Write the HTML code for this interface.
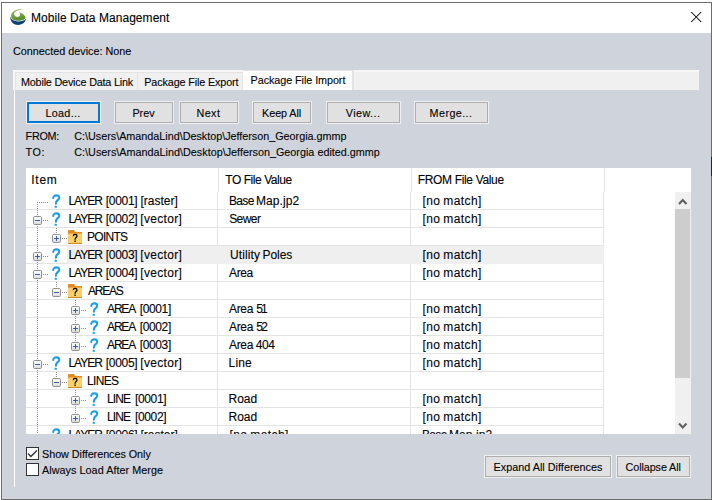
<!DOCTYPE html>
<html><head><meta charset="utf-8"><title>Mobile Data Management</title>
<style>
html,body{margin:0;padding:0;width:712px;height:500px;overflow:hidden;background:#fff;position:relative}
.b{position:absolute}
.t{position:absolute;font-family:"Liberation Sans",sans-serif;line-height:20px;white-space:pre;-webkit-text-stroke:0.1px #000}
.ov{position:absolute;left:0;top:0}
.clipt{position:absolute;left:0;top:0;width:712px;height:434px;overflow:hidden}
</style></head><body>
<div class='b' style='left:1px;top:2px;width:711px;height:498px;border:1px solid #6b6b6b;box-sizing:border-box;background:#cfd4dc'></div><div class='b' style='left:2px;top:3px;width:709px;height:30px;background:#fff'></div><div class='b' style='left:711px;top:157px;width:1px;height:19px;background:#13294a'></div><div class='b' style='left:13px;top:70px;width:686px;height:20px;background:#f7f7f7'></div><div class='b' style='left:15px;top:72px;width:684px;height:18px;background:#f0f0f0'></div><div class='b' style='left:15px;top:72px;width:123px;height:18px;border:1px solid #e3e3e3;border-bottom:none;box-sizing:border-box;background:#f0f0f0'></div><div class='b' style='left:138px;top:72px;width:105px;height:18px;border:1px solid #e3e3e3;border-bottom:none;border-left:none;box-sizing:border-box;background:#f0f0f0'></div><div class='b' style='left:243px;top:70px;width:111px;height:20px;background:#e3e3e3'></div><div class='b' style='left:243px;top:71px;width:109px;height:19px;background:#fff'></div><div class='b' style='left:14px;top:90px;width:1px;height:397px;background:#fff'></div><div class='b' style='left:26px;top:101px;width:75px;height:23px;background:rgba(255,255,255,0.65)'></div><div class='b' style='left:27px;top:102px;width:73px;height:21px;background:#e1e1e1;border:2px solid #0078d7;box-sizing:border-box'></div><div class='b' style='left:114px;top:101px;width:60px;height:23px;background:rgba(255,255,255,0.65)'></div><div class='b' style='left:115px;top:102px;width:58px;height:21px;background:#e1e1e1;border:1px solid #adadad;box-sizing:border-box'></div><div class='b' style='left:179px;top:101px;width:60px;height:23px;background:rgba(255,255,255,0.65)'></div><div class='b' style='left:180px;top:102px;width:58px;height:21px;background:#e1e1e1;border:1px solid #adadad;box-sizing:border-box'></div><div class='b' style='left:252px;top:101px;width:60px;height:23px;background:rgba(255,255,255,0.65)'></div><div class='b' style='left:253px;top:102px;width:58px;height:21px;background:#e1e1e1;border:1px solid #adadad;box-sizing:border-box'></div><div class='b' style='left:326px;top:101px;width:75px;height:23px;background:rgba(255,255,255,0.65)'></div><div class='b' style='left:327px;top:102px;width:73px;height:21px;background:#e1e1e1;border:1px solid #adadad;box-sizing:border-box'></div><div class='b' style='left:414px;top:101px;width:75px;height:23px;background:rgba(255,255,255,0.65)'></div><div class='b' style='left:415px;top:102px;width:73px;height:21px;background:#e1e1e1;border:1px solid #adadad;box-sizing:border-box'></div><div class='b' style='left:484px;top:455px;width:128px;height:23px;background:rgba(255,255,255,0.65)'></div><div class='b' style='left:485px;top:456px;width:126px;height:21px;background:#e1e1e1;border:1px solid #adadad;box-sizing:border-box'></div><div class='b' style='left:616px;top:455px;width:75px;height:23px;background:rgba(255,255,255,0.65)'></div><div class='b' style='left:617px;top:456px;width:73px;height:21px;background:#e1e1e1;border:1px solid #adadad;box-sizing:border-box'></div><div class='b' style='left:26px;top:168px;width:665px;height:266px;background:#fff'></div><div class='b' style='left:218px;top:168px;width:1px;height:24px;background:#e3e3e3'></div><div class='b' style='left:411px;top:168px;width:1px;height:24px;background:#e3e3e3'></div><div class='b' style='left:604px;top:168px;width:1px;height:24px;background:#e3e3e3'></div><div class='b' style='left:26px;top:209px;width:578px;height:1px;background:#e3e3e3'></div><div class='b' style='left:26px;top:227px;width:578px;height:1px;background:#e3e3e3'></div><div class='b' style='left:26px;top:245px;width:578px;height:1px;background:#e3e3e3'></div><div class='b' style='left:26px;top:263px;width:578px;height:1px;background:#e3e3e3'></div><div class='b' style='left:26px;top:281px;width:578px;height:1px;background:#e3e3e3'></div><div class='b' style='left:26px;top:299px;width:578px;height:1px;background:#e3e3e3'></div><div class='b' style='left:26px;top:317px;width:578px;height:1px;background:#e3e3e3'></div><div class='b' style='left:26px;top:335px;width:578px;height:1px;background:#e3e3e3'></div><div class='b' style='left:26px;top:353px;width:578px;height:1px;background:#e3e3e3'></div><div class='b' style='left:26px;top:371px;width:578px;height:1px;background:#e3e3e3'></div><div class='b' style='left:26px;top:389px;width:578px;height:1px;background:#e3e3e3'></div><div class='b' style='left:26px;top:407px;width:578px;height:1px;background:#e3e3e3'></div><div class='b' style='left:26px;top:425px;width:578px;height:1px;background:#e3e3e3'></div><div class='b' style='left:217px;top:192px;width:1px;height:242px;background:#e3e3e3'></div><div class='b' style='left:410px;top:192px;width:1px;height:242px;background:#e3e3e3'></div><div class='b' style='left:603px;top:192px;width:1px;height:242px;background:#e3e3e3'></div><div class='b' style='left:67px;top:246px;width:537px;height:18px;background:#efefef'></div><div class='b' style='left:675px;top:192px;width:16px;height:242px;background:#f0f0f0'></div><div class='b' style='left:675px;top:209px;width:15px;height:169px;background:#cdcdcd'></div><div class='b' style='left:26px;top:447px;width:13px;height:13px;background:#fff;border:1px solid #333;box-sizing:border-box'></div><div class='b' style='left:26px;top:463px;width:13px;height:13px;background:#fff;border:1px solid #333;box-sizing:border-box'></div>
<svg class='ov' width='712' height='500' viewBox='0 0 712 500'><defs><linearGradient id='eg' x1='0' y1='0' x2='0' y2='1'><stop offset='0' stop-color='#ffffff'/><stop offset='1' stop-color='#dcdcdc'/></linearGradient><clipPath id='tc'><rect x='26' y='168' width='665' height='266'/></clipPath></defs><g clip-path='url(#tc)'><path d='M679 204 L682.75 200 L686.5 204' stroke='#606060' stroke-width='2.1' fill='none'/><path d='M679 423.5 L682.75 427.5 L686.5 423.5' stroke='#606060' stroke-width='2.1' fill='none'/><rect x='37' y='202' width='1' height='1' fill='#8c8c8c'/><rect x='37' y='204' width='1' height='1' fill='#8c8c8c'/><rect x='37' y='206' width='1' height='1' fill='#8c8c8c'/><rect x='37' y='208' width='1' height='1' fill='#8c8c8c'/><rect x='37' y='202' width='1' height='1' fill='#8c8c8c'/><rect x='39' y='202' width='1' height='1' fill='#8c8c8c'/><rect x='41' y='202' width='1' height='1' fill='#8c8c8c'/><rect x='43' y='202' width='1' height='1' fill='#8c8c8c'/><rect x='45' y='202' width='1' height='1' fill='#8c8c8c'/><rect x='47' y='202' width='1' height='1' fill='#8c8c8c'/><g transform='translate(52,194.5)'><path d='M1.3 3.5 C1.3 1.6 2.6 0.9 4.3 0.9 C6.2 0.9 7.2 1.9 7.2 3.3 C7.2 4.7 6 5.4 5.1 6.1 C4.3 6.8 3.9 7.6 3.9 9.3' stroke='#1e9fe6' stroke-width='2.1' fill='none' stroke-linecap='round'/><path d='M3.8 10.9 L5.3 12.3 L4.8 13.2 L2.8 13.2 L2.3 12.3Z' fill='#1e9fe6'/></g><rect x='37' y='210' width='1' height='1' fill='#8c8c8c'/><rect x='37' y='212' width='1' height='1' fill='#8c8c8c'/><rect x='37' y='214' width='1' height='1' fill='#8c8c8c'/><rect x='37' y='216' width='1' height='1' fill='#8c8c8c'/><rect x='37' y='218' width='1' height='1' fill='#8c8c8c'/><rect x='37' y='220' width='1' height='1' fill='#8c8c8c'/><rect x='37' y='220' width='1' height='1' fill='#8c8c8c'/><rect x='37' y='222' width='1' height='1' fill='#8c8c8c'/><rect x='37' y='224' width='1' height='1' fill='#8c8c8c'/><rect x='37' y='226' width='1' height='1' fill='#8c8c8c'/><rect x='37' y='220' width='1' height='1' fill='#8c8c8c'/><rect x='39' y='220' width='1' height='1' fill='#8c8c8c'/><rect x='41' y='220' width='1' height='1' fill='#8c8c8c'/><rect x='43' y='220' width='1' height='1' fill='#8c8c8c'/><rect x='45' y='220' width='1' height='1' fill='#8c8c8c'/><rect x='47' y='220' width='1' height='1' fill='#8c8c8c'/><rect x='33.5' y='216.5' width='8' height='8' rx='1.2' fill='url(#eg)' stroke='#8f8f8f'/><rect x='35' y='220' width='5' height='1' fill='#3c5da8'/><g transform='translate(52,212.5)'><path d='M1.3 3.5 C1.3 1.6 2.6 0.9 4.3 0.9 C6.2 0.9 7.2 1.9 7.2 3.3 C7.2 4.7 6 5.4 5.1 6.1 C4.3 6.8 3.9 7.6 3.9 9.3' stroke='#1e9fe6' stroke-width='2.1' fill='none' stroke-linecap='round'/><path d='M3.8 10.9 L5.3 12.3 L4.8 13.2 L2.8 13.2 L2.3 12.3Z' fill='#1e9fe6'/></g><rect x='37' y='228' width='1' height='1' fill='#8c8c8c'/><rect x='37' y='230' width='1' height='1' fill='#8c8c8c'/><rect x='37' y='232' width='1' height='1' fill='#8c8c8c'/><rect x='37' y='234' width='1' height='1' fill='#8c8c8c'/><rect x='37' y='236' width='1' height='1' fill='#8c8c8c'/><rect x='37' y='238' width='1' height='1' fill='#8c8c8c'/><rect x='37' y='240' width='1' height='1' fill='#8c8c8c'/><rect x='37' y='242' width='1' height='1' fill='#8c8c8c'/><rect x='37' y='244' width='1' height='1' fill='#8c8c8c'/><rect x='56' y='228' width='1' height='1' fill='#8c8c8c'/><rect x='56' y='230' width='1' height='1' fill='#8c8c8c'/><rect x='56' y='232' width='1' height='1' fill='#8c8c8c'/><rect x='56' y='234' width='1' height='1' fill='#8c8c8c'/><rect x='56' y='236' width='1' height='1' fill='#8c8c8c'/><rect x='56' y='238' width='1' height='1' fill='#8c8c8c'/><rect x='56' y='238' width='1' height='1' fill='#8c8c8c'/><rect x='58' y='238' width='1' height='1' fill='#8c8c8c'/><rect x='60' y='238' width='1' height='1' fill='#8c8c8c'/><rect x='62' y='238' width='1' height='1' fill='#8c8c8c'/><rect x='64' y='238' width='1' height='1' fill='#8c8c8c'/><rect x='66' y='238' width='1' height='1' fill='#8c8c8c'/><rect x='52.5' y='234.5' width='8' height='8' rx='1.2' fill='url(#eg)' stroke='#8f8f8f'/><rect x='54' y='238' width='5' height='1' fill='#3c5da8'/><rect x='56' y='236' width='1' height='5' fill='#3c5da8'/><g transform='translate(68,230)'><path d='M0 1 Q0 0 1 0 L6 0 L7 2 L14 2 L14 14 L0 14Z' fill='#e38a22'/><rect x='0' y='3.5' width='14' height='10.5' fill='#fbd06a'/><rect x='0' y='3' width='14' height='1' fill='#f0a640'/><rect x='0' y='13' width='14' height='1' fill='#c98a2a'/><path d='M5.3 6.2 C5.3 4.9 6.1 4.4 7.1 4.4 C8.2 4.4 9 5 9 6 C9 7 8.3 7.4 7.7 7.8 C7.2 8.2 7.1 8.7 7.1 9.7' stroke='#000' stroke-width='1.25' fill='none'/><rect x='6.4' y='10.5' width='1.4' height='1.4' fill='#000'/></g><rect x='37' y='246' width='1' height='1' fill='#8c8c8c'/><rect x='37' y='248' width='1' height='1' fill='#8c8c8c'/><rect x='37' y='250' width='1' height='1' fill='#8c8c8c'/><rect x='37' y='252' width='1' height='1' fill='#8c8c8c'/><rect x='37' y='254' width='1' height='1' fill='#8c8c8c'/><rect x='37' y='256' width='1' height='1' fill='#8c8c8c'/><rect x='37' y='256' width='1' height='1' fill='#8c8c8c'/><rect x='37' y='258' width='1' height='1' fill='#8c8c8c'/><rect x='37' y='260' width='1' height='1' fill='#8c8c8c'/><rect x='37' y='262' width='1' height='1' fill='#8c8c8c'/><rect x='37' y='256' width='1' height='1' fill='#8c8c8c'/><rect x='39' y='256' width='1' height='1' fill='#8c8c8c'/><rect x='41' y='256' width='1' height='1' fill='#8c8c8c'/><rect x='43' y='256' width='1' height='1' fill='#8c8c8c'/><rect x='45' y='256' width='1' height='1' fill='#8c8c8c'/><rect x='47' y='256' width='1' height='1' fill='#8c8c8c'/><rect x='33.5' y='252.5' width='8' height='8' rx='1.2' fill='url(#eg)' stroke='#8f8f8f'/><rect x='35' y='256' width='5' height='1' fill='#3c5da8'/><rect x='37' y='254' width='1' height='5' fill='#3c5da8'/><g transform='translate(52,248.5)'><path d='M1.3 3.5 C1.3 1.6 2.6 0.9 4.3 0.9 C6.2 0.9 7.2 1.9 7.2 3.3 C7.2 4.7 6 5.4 5.1 6.1 C4.3 6.8 3.9 7.6 3.9 9.3' stroke='#1e9fe6' stroke-width='2.1' fill='none' stroke-linecap='round'/><path d='M3.8 10.9 L5.3 12.3 L4.8 13.2 L2.8 13.2 L2.3 12.3Z' fill='#1e9fe6'/></g><rect x='37' y='264' width='1' height='1' fill='#8c8c8c'/><rect x='37' y='266' width='1' height='1' fill='#8c8c8c'/><rect x='37' y='268' width='1' height='1' fill='#8c8c8c'/><rect x='37' y='270' width='1' height='1' fill='#8c8c8c'/><rect x='37' y='272' width='1' height='1' fill='#8c8c8c'/><rect x='37' y='274' width='1' height='1' fill='#8c8c8c'/><rect x='37' y='274' width='1' height='1' fill='#8c8c8c'/><rect x='37' y='276' width='1' height='1' fill='#8c8c8c'/><rect x='37' y='278' width='1' height='1' fill='#8c8c8c'/><rect x='37' y='280' width='1' height='1' fill='#8c8c8c'/><rect x='37' y='274' width='1' height='1' fill='#8c8c8c'/><rect x='39' y='274' width='1' height='1' fill='#8c8c8c'/><rect x='41' y='274' width='1' height='1' fill='#8c8c8c'/><rect x='43' y='274' width='1' height='1' fill='#8c8c8c'/><rect x='45' y='274' width='1' height='1' fill='#8c8c8c'/><rect x='47' y='274' width='1' height='1' fill='#8c8c8c'/><rect x='33.5' y='270.5' width='8' height='8' rx='1.2' fill='url(#eg)' stroke='#8f8f8f'/><rect x='35' y='274' width='5' height='1' fill='#3c5da8'/><g transform='translate(52,266.5)'><path d='M1.3 3.5 C1.3 1.6 2.6 0.9 4.3 0.9 C6.2 0.9 7.2 1.9 7.2 3.3 C7.2 4.7 6 5.4 5.1 6.1 C4.3 6.8 3.9 7.6 3.9 9.3' stroke='#1e9fe6' stroke-width='2.1' fill='none' stroke-linecap='round'/><path d='M3.8 10.9 L5.3 12.3 L4.8 13.2 L2.8 13.2 L2.3 12.3Z' fill='#1e9fe6'/></g><rect x='37' y='282' width='1' height='1' fill='#8c8c8c'/><rect x='37' y='284' width='1' height='1' fill='#8c8c8c'/><rect x='37' y='286' width='1' height='1' fill='#8c8c8c'/><rect x='37' y='288' width='1' height='1' fill='#8c8c8c'/><rect x='37' y='290' width='1' height='1' fill='#8c8c8c'/><rect x='37' y='292' width='1' height='1' fill='#8c8c8c'/><rect x='37' y='294' width='1' height='1' fill='#8c8c8c'/><rect x='37' y='296' width='1' height='1' fill='#8c8c8c'/><rect x='37' y='298' width='1' height='1' fill='#8c8c8c'/><rect x='56' y='282' width='1' height='1' fill='#8c8c8c'/><rect x='56' y='284' width='1' height='1' fill='#8c8c8c'/><rect x='56' y='286' width='1' height='1' fill='#8c8c8c'/><rect x='56' y='288' width='1' height='1' fill='#8c8c8c'/><rect x='56' y='290' width='1' height='1' fill='#8c8c8c'/><rect x='56' y='292' width='1' height='1' fill='#8c8c8c'/><rect x='56' y='292' width='1' height='1' fill='#8c8c8c'/><rect x='58' y='292' width='1' height='1' fill='#8c8c8c'/><rect x='60' y='292' width='1' height='1' fill='#8c8c8c'/><rect x='62' y='292' width='1' height='1' fill='#8c8c8c'/><rect x='64' y='292' width='1' height='1' fill='#8c8c8c'/><rect x='66' y='292' width='1' height='1' fill='#8c8c8c'/><rect x='52.5' y='288.5' width='8' height='8' rx='1.2' fill='url(#eg)' stroke='#8f8f8f'/><rect x='54' y='292' width='5' height='1' fill='#3c5da8'/><g transform='translate(68,284)'><path d='M0 1 Q0 0 1 0 L6 0 L7 2 L14 2 L14 14 L0 14Z' fill='#e38a22'/><rect x='0' y='3.5' width='14' height='10.5' fill='#fbd06a'/><rect x='0' y='3' width='14' height='1' fill='#f0a640'/><rect x='0' y='13' width='14' height='1' fill='#c98a2a'/><path d='M5.3 6.2 C5.3 4.9 6.1 4.4 7.1 4.4 C8.2 4.4 9 5 9 6 C9 7 8.3 7.4 7.7 7.8 C7.2 8.2 7.1 8.7 7.1 9.7' stroke='#000' stroke-width='1.25' fill='none'/><rect x='6.4' y='10.5' width='1.4' height='1.4' fill='#000'/></g><rect x='37' y='300' width='1' height='1' fill='#8c8c8c'/><rect x='37' y='302' width='1' height='1' fill='#8c8c8c'/><rect x='37' y='304' width='1' height='1' fill='#8c8c8c'/><rect x='37' y='306' width='1' height='1' fill='#8c8c8c'/><rect x='37' y='308' width='1' height='1' fill='#8c8c8c'/><rect x='37' y='310' width='1' height='1' fill='#8c8c8c'/><rect x='37' y='312' width='1' height='1' fill='#8c8c8c'/><rect x='37' y='314' width='1' height='1' fill='#8c8c8c'/><rect x='37' y='316' width='1' height='1' fill='#8c8c8c'/><rect x='75' y='300' width='1' height='1' fill='#8c8c8c'/><rect x='75' y='302' width='1' height='1' fill='#8c8c8c'/><rect x='75' y='304' width='1' height='1' fill='#8c8c8c'/><rect x='75' y='306' width='1' height='1' fill='#8c8c8c'/><rect x='75' y='308' width='1' height='1' fill='#8c8c8c'/><rect x='75' y='310' width='1' height='1' fill='#8c8c8c'/><rect x='75' y='310' width='1' height='1' fill='#8c8c8c'/><rect x='75' y='312' width='1' height='1' fill='#8c8c8c'/><rect x='75' y='314' width='1' height='1' fill='#8c8c8c'/><rect x='75' y='316' width='1' height='1' fill='#8c8c8c'/><rect x='75' y='310' width='1' height='1' fill='#8c8c8c'/><rect x='77' y='310' width='1' height='1' fill='#8c8c8c'/><rect x='79' y='310' width='1' height='1' fill='#8c8c8c'/><rect x='81' y='310' width='1' height='1' fill='#8c8c8c'/><rect x='83' y='310' width='1' height='1' fill='#8c8c8c'/><rect x='85' y='310' width='1' height='1' fill='#8c8c8c'/><rect x='71.5' y='306.5' width='8' height='8' rx='1.2' fill='url(#eg)' stroke='#8f8f8f'/><rect x='73' y='310' width='5' height='1' fill='#3c5da8'/><rect x='75' y='308' width='1' height='5' fill='#3c5da8'/><g transform='translate(90,302.5)'><path d='M1.3 3.5 C1.3 1.6 2.6 0.9 4.3 0.9 C6.2 0.9 7.2 1.9 7.2 3.3 C7.2 4.7 6 5.4 5.1 6.1 C4.3 6.8 3.9 7.6 3.9 9.3' stroke='#1e9fe6' stroke-width='2.1' fill='none' stroke-linecap='round'/><path d='M3.8 10.9 L5.3 12.3 L4.8 13.2 L2.8 13.2 L2.3 12.3Z' fill='#1e9fe6'/></g><rect x='37' y='318' width='1' height='1' fill='#8c8c8c'/><rect x='37' y='320' width='1' height='1' fill='#8c8c8c'/><rect x='37' y='322' width='1' height='1' fill='#8c8c8c'/><rect x='37' y='324' width='1' height='1' fill='#8c8c8c'/><rect x='37' y='326' width='1' height='1' fill='#8c8c8c'/><rect x='37' y='328' width='1' height='1' fill='#8c8c8c'/><rect x='37' y='330' width='1' height='1' fill='#8c8c8c'/><rect x='37' y='332' width='1' height='1' fill='#8c8c8c'/><rect x='37' y='334' width='1' height='1' fill='#8c8c8c'/><rect x='75' y='318' width='1' height='1' fill='#8c8c8c'/><rect x='75' y='320' width='1' height='1' fill='#8c8c8c'/><rect x='75' y='322' width='1' height='1' fill='#8c8c8c'/><rect x='75' y='324' width='1' height='1' fill='#8c8c8c'/><rect x='75' y='326' width='1' height='1' fill='#8c8c8c'/><rect x='75' y='328' width='1' height='1' fill='#8c8c8c'/><rect x='75' y='328' width='1' height='1' fill='#8c8c8c'/><rect x='75' y='330' width='1' height='1' fill='#8c8c8c'/><rect x='75' y='332' width='1' height='1' fill='#8c8c8c'/><rect x='75' y='334' width='1' height='1' fill='#8c8c8c'/><rect x='75' y='328' width='1' height='1' fill='#8c8c8c'/><rect x='77' y='328' width='1' height='1' fill='#8c8c8c'/><rect x='79' y='328' width='1' height='1' fill='#8c8c8c'/><rect x='81' y='328' width='1' height='1' fill='#8c8c8c'/><rect x='83' y='328' width='1' height='1' fill='#8c8c8c'/><rect x='85' y='328' width='1' height='1' fill='#8c8c8c'/><rect x='71.5' y='324.5' width='8' height='8' rx='1.2' fill='url(#eg)' stroke='#8f8f8f'/><rect x='73' y='328' width='5' height='1' fill='#3c5da8'/><rect x='75' y='326' width='1' height='5' fill='#3c5da8'/><g transform='translate(90,320.5)'><path d='M1.3 3.5 C1.3 1.6 2.6 0.9 4.3 0.9 C6.2 0.9 7.2 1.9 7.2 3.3 C7.2 4.7 6 5.4 5.1 6.1 C4.3 6.8 3.9 7.6 3.9 9.3' stroke='#1e9fe6' stroke-width='2.1' fill='none' stroke-linecap='round'/><path d='M3.8 10.9 L5.3 12.3 L4.8 13.2 L2.8 13.2 L2.3 12.3Z' fill='#1e9fe6'/></g><rect x='37' y='336' width='1' height='1' fill='#8c8c8c'/><rect x='37' y='338' width='1' height='1' fill='#8c8c8c'/><rect x='37' y='340' width='1' height='1' fill='#8c8c8c'/><rect x='37' y='342' width='1' height='1' fill='#8c8c8c'/><rect x='37' y='344' width='1' height='1' fill='#8c8c8c'/><rect x='37' y='346' width='1' height='1' fill='#8c8c8c'/><rect x='37' y='348' width='1' height='1' fill='#8c8c8c'/><rect x='37' y='350' width='1' height='1' fill='#8c8c8c'/><rect x='37' y='352' width='1' height='1' fill='#8c8c8c'/><rect x='75' y='336' width='1' height='1' fill='#8c8c8c'/><rect x='75' y='338' width='1' height='1' fill='#8c8c8c'/><rect x='75' y='340' width='1' height='1' fill='#8c8c8c'/><rect x='75' y='342' width='1' height='1' fill='#8c8c8c'/><rect x='75' y='344' width='1' height='1' fill='#8c8c8c'/><rect x='75' y='346' width='1' height='1' fill='#8c8c8c'/><rect x='75' y='346' width='1' height='1' fill='#8c8c8c'/><rect x='77' y='346' width='1' height='1' fill='#8c8c8c'/><rect x='79' y='346' width='1' height='1' fill='#8c8c8c'/><rect x='81' y='346' width='1' height='1' fill='#8c8c8c'/><rect x='83' y='346' width='1' height='1' fill='#8c8c8c'/><rect x='85' y='346' width='1' height='1' fill='#8c8c8c'/><rect x='71.5' y='342.5' width='8' height='8' rx='1.2' fill='url(#eg)' stroke='#8f8f8f'/><rect x='73' y='346' width='5' height='1' fill='#3c5da8'/><rect x='75' y='344' width='1' height='5' fill='#3c5da8'/><g transform='translate(90,338.5)'><path d='M1.3 3.5 C1.3 1.6 2.6 0.9 4.3 0.9 C6.2 0.9 7.2 1.9 7.2 3.3 C7.2 4.7 6 5.4 5.1 6.1 C4.3 6.8 3.9 7.6 3.9 9.3' stroke='#1e9fe6' stroke-width='2.1' fill='none' stroke-linecap='round'/><path d='M3.8 10.9 L5.3 12.3 L4.8 13.2 L2.8 13.2 L2.3 12.3Z' fill='#1e9fe6'/></g><rect x='37' y='354' width='1' height='1' fill='#8c8c8c'/><rect x='37' y='356' width='1' height='1' fill='#8c8c8c'/><rect x='37' y='358' width='1' height='1' fill='#8c8c8c'/><rect x='37' y='360' width='1' height='1' fill='#8c8c8c'/><rect x='37' y='362' width='1' height='1' fill='#8c8c8c'/><rect x='37' y='364' width='1' height='1' fill='#8c8c8c'/><rect x='37' y='364' width='1' height='1' fill='#8c8c8c'/><rect x='37' y='366' width='1' height='1' fill='#8c8c8c'/><rect x='37' y='368' width='1' height='1' fill='#8c8c8c'/><rect x='37' y='370' width='1' height='1' fill='#8c8c8c'/><rect x='37' y='364' width='1' height='1' fill='#8c8c8c'/><rect x='39' y='364' width='1' height='1' fill='#8c8c8c'/><rect x='41' y='364' width='1' height='1' fill='#8c8c8c'/><rect x='43' y='364' width='1' height='1' fill='#8c8c8c'/><rect x='45' y='364' width='1' height='1' fill='#8c8c8c'/><rect x='47' y='364' width='1' height='1' fill='#8c8c8c'/><rect x='33.5' y='360.5' width='8' height='8' rx='1.2' fill='url(#eg)' stroke='#8f8f8f'/><rect x='35' y='364' width='5' height='1' fill='#3c5da8'/><g transform='translate(52,356.5)'><path d='M1.3 3.5 C1.3 1.6 2.6 0.9 4.3 0.9 C6.2 0.9 7.2 1.9 7.2 3.3 C7.2 4.7 6 5.4 5.1 6.1 C4.3 6.8 3.9 7.6 3.9 9.3' stroke='#1e9fe6' stroke-width='2.1' fill='none' stroke-linecap='round'/><path d='M3.8 10.9 L5.3 12.3 L4.8 13.2 L2.8 13.2 L2.3 12.3Z' fill='#1e9fe6'/></g><rect x='37' y='372' width='1' height='1' fill='#8c8c8c'/><rect x='37' y='374' width='1' height='1' fill='#8c8c8c'/><rect x='37' y='376' width='1' height='1' fill='#8c8c8c'/><rect x='37' y='378' width='1' height='1' fill='#8c8c8c'/><rect x='37' y='380' width='1' height='1' fill='#8c8c8c'/><rect x='37' y='382' width='1' height='1' fill='#8c8c8c'/><rect x='37' y='384' width='1' height='1' fill='#8c8c8c'/><rect x='37' y='386' width='1' height='1' fill='#8c8c8c'/><rect x='37' y='388' width='1' height='1' fill='#8c8c8c'/><rect x='56' y='372' width='1' height='1' fill='#8c8c8c'/><rect x='56' y='374' width='1' height='1' fill='#8c8c8c'/><rect x='56' y='376' width='1' height='1' fill='#8c8c8c'/><rect x='56' y='378' width='1' height='1' fill='#8c8c8c'/><rect x='56' y='380' width='1' height='1' fill='#8c8c8c'/><rect x='56' y='382' width='1' height='1' fill='#8c8c8c'/><rect x='56' y='382' width='1' height='1' fill='#8c8c8c'/><rect x='58' y='382' width='1' height='1' fill='#8c8c8c'/><rect x='60' y='382' width='1' height='1' fill='#8c8c8c'/><rect x='62' y='382' width='1' height='1' fill='#8c8c8c'/><rect x='64' y='382' width='1' height='1' fill='#8c8c8c'/><rect x='66' y='382' width='1' height='1' fill='#8c8c8c'/><rect x='52.5' y='378.5' width='8' height='8' rx='1.2' fill='url(#eg)' stroke='#8f8f8f'/><rect x='54' y='382' width='5' height='1' fill='#3c5da8'/><g transform='translate(68,374)'><path d='M0 1 Q0 0 1 0 L6 0 L7 2 L14 2 L14 14 L0 14Z' fill='#e38a22'/><rect x='0' y='3.5' width='14' height='10.5' fill='#fbd06a'/><rect x='0' y='3' width='14' height='1' fill='#f0a640'/><rect x='0' y='13' width='14' height='1' fill='#c98a2a'/><path d='M5.3 6.2 C5.3 4.9 6.1 4.4 7.1 4.4 C8.2 4.4 9 5 9 6 C9 7 8.3 7.4 7.7 7.8 C7.2 8.2 7.1 8.7 7.1 9.7' stroke='#000' stroke-width='1.25' fill='none'/><rect x='6.4' y='10.5' width='1.4' height='1.4' fill='#000'/></g><rect x='37' y='390' width='1' height='1' fill='#8c8c8c'/><rect x='37' y='392' width='1' height='1' fill='#8c8c8c'/><rect x='37' y='394' width='1' height='1' fill='#8c8c8c'/><rect x='37' y='396' width='1' height='1' fill='#8c8c8c'/><rect x='37' y='398' width='1' height='1' fill='#8c8c8c'/><rect x='37' y='400' width='1' height='1' fill='#8c8c8c'/><rect x='37' y='402' width='1' height='1' fill='#8c8c8c'/><rect x='37' y='404' width='1' height='1' fill='#8c8c8c'/><rect x='37' y='406' width='1' height='1' fill='#8c8c8c'/><rect x='75' y='390' width='1' height='1' fill='#8c8c8c'/><rect x='75' y='392' width='1' height='1' fill='#8c8c8c'/><rect x='75' y='394' width='1' height='1' fill='#8c8c8c'/><rect x='75' y='396' width='1' height='1' fill='#8c8c8c'/><rect x='75' y='398' width='1' height='1' fill='#8c8c8c'/><rect x='75' y='400' width='1' height='1' fill='#8c8c8c'/><rect x='75' y='400' width='1' height='1' fill='#8c8c8c'/><rect x='75' y='402' width='1' height='1' fill='#8c8c8c'/><rect x='75' y='404' width='1' height='1' fill='#8c8c8c'/><rect x='75' y='406' width='1' height='1' fill='#8c8c8c'/><rect x='75' y='400' width='1' height='1' fill='#8c8c8c'/><rect x='77' y='400' width='1' height='1' fill='#8c8c8c'/><rect x='79' y='400' width='1' height='1' fill='#8c8c8c'/><rect x='81' y='400' width='1' height='1' fill='#8c8c8c'/><rect x='83' y='400' width='1' height='1' fill='#8c8c8c'/><rect x='85' y='400' width='1' height='1' fill='#8c8c8c'/><rect x='71.5' y='396.5' width='8' height='8' rx='1.2' fill='url(#eg)' stroke='#8f8f8f'/><rect x='73' y='400' width='5' height='1' fill='#3c5da8'/><rect x='75' y='398' width='1' height='5' fill='#3c5da8'/><g transform='translate(90,392.5)'><path d='M1.3 3.5 C1.3 1.6 2.6 0.9 4.3 0.9 C6.2 0.9 7.2 1.9 7.2 3.3 C7.2 4.7 6 5.4 5.1 6.1 C4.3 6.8 3.9 7.6 3.9 9.3' stroke='#1e9fe6' stroke-width='2.1' fill='none' stroke-linecap='round'/><path d='M3.8 10.9 L5.3 12.3 L4.8 13.2 L2.8 13.2 L2.3 12.3Z' fill='#1e9fe6'/></g><rect x='37' y='408' width='1' height='1' fill='#8c8c8c'/><rect x='37' y='410' width='1' height='1' fill='#8c8c8c'/><rect x='37' y='412' width='1' height='1' fill='#8c8c8c'/><rect x='37' y='414' width='1' height='1' fill='#8c8c8c'/><rect x='37' y='416' width='1' height='1' fill='#8c8c8c'/><rect x='37' y='418' width='1' height='1' fill='#8c8c8c'/><rect x='37' y='420' width='1' height='1' fill='#8c8c8c'/><rect x='37' y='422' width='1' height='1' fill='#8c8c8c'/><rect x='37' y='424' width='1' height='1' fill='#8c8c8c'/><rect x='75' y='408' width='1' height='1' fill='#8c8c8c'/><rect x='75' y='410' width='1' height='1' fill='#8c8c8c'/><rect x='75' y='412' width='1' height='1' fill='#8c8c8c'/><rect x='75' y='414' width='1' height='1' fill='#8c8c8c'/><rect x='75' y='416' width='1' height='1' fill='#8c8c8c'/><rect x='75' y='418' width='1' height='1' fill='#8c8c8c'/><rect x='75' y='418' width='1' height='1' fill='#8c8c8c'/><rect x='77' y='418' width='1' height='1' fill='#8c8c8c'/><rect x='79' y='418' width='1' height='1' fill='#8c8c8c'/><rect x='81' y='418' width='1' height='1' fill='#8c8c8c'/><rect x='83' y='418' width='1' height='1' fill='#8c8c8c'/><rect x='85' y='418' width='1' height='1' fill='#8c8c8c'/><rect x='71.5' y='414.5' width='8' height='8' rx='1.2' fill='url(#eg)' stroke='#8f8f8f'/><rect x='73' y='418' width='5' height='1' fill='#3c5da8'/><rect x='75' y='416' width='1' height='5' fill='#3c5da8'/><g transform='translate(90,410.5)'><path d='M1.3 3.5 C1.3 1.6 2.6 0.9 4.3 0.9 C6.2 0.9 7.2 1.9 7.2 3.3 C7.2 4.7 6 5.4 5.1 6.1 C4.3 6.8 3.9 7.6 3.9 9.3' stroke='#1e9fe6' stroke-width='2.1' fill='none' stroke-linecap='round'/><path d='M3.8 10.9 L5.3 12.3 L4.8 13.2 L2.8 13.2 L2.3 12.3Z' fill='#1e9fe6'/></g><rect x='37' y='426' width='1' height='1' fill='#8c8c8c'/><rect x='37' y='428' width='1' height='1' fill='#8c8c8c'/><rect x='37' y='430' width='1' height='1' fill='#8c8c8c'/><rect x='37' y='432' width='1' height='1' fill='#8c8c8c'/><rect x='37' y='436' width='1' height='1' fill='#8c8c8c'/><rect x='39' y='436' width='1' height='1' fill='#8c8c8c'/><rect x='41' y='436' width='1' height='1' fill='#8c8c8c'/><rect x='43' y='436' width='1' height='1' fill='#8c8c8c'/><rect x='45' y='436' width='1' height='1' fill='#8c8c8c'/><rect x='47' y='436' width='1' height='1' fill='#8c8c8c'/><g transform='translate(52,428.5)'><path d='M1.3 3.5 C1.3 1.6 2.6 0.9 4.3 0.9 C6.2 0.9 7.2 1.9 7.2 3.3 C7.2 4.7 6 5.4 5.1 6.1 C4.3 6.8 3.9 7.6 3.9 9.3' stroke='#1e9fe6' stroke-width='2.1' fill='none' stroke-linecap='round'/><path d='M3.8 10.9 L5.3 12.3 L4.8 13.2 L2.8 13.2 L2.3 12.3Z' fill='#1e9fe6'/></g></g><path d='M691.2 12 L701.2 22 M701.2 12 L691.2 22' stroke='#000' stroke-width='1.05'/><g transform='translate(10,9)'><defs><linearGradient id='gg' x1='0.2' y1='0' x2='0.5' y2='1'><stop offset='0' stop-color='#9cba5a'/><stop offset='0.5' stop-color='#75a240'/><stop offset='1' stop-color='#568a2e'/></linearGradient></defs><path d='M0.1 7.6 C0.4 13.5 3.8 15.95 8 15.95 C12.2 15.95 15.6 13.5 15.9 9.6 C14.6 11.9 11.6 12.4 8 12.4 C4.2 12.4 1.4 11 0.1 7.6Z' fill='#0b4272'/><path d='M13.2 0.3 C7 -0.5 1 2 1.1 7 C1.2 10.5 4.5 11.7 8 11.7 C11.5 11.7 15.3 10.6 15.4 8.4 C15.4 6.6 12.5 4.2 9 3.3 C10 4.3 10.3 5.5 10 6.6 C9.5 7.6 8.5 8 7.2 7.9 C5.2 7.7 4.1 6.5 4.1 5 C4.1 2.6 7.5 1.3 13.2 0.3Z' fill='url(#gg)'/></g><path d='M28 453.6 L30.9 456.4 L36.9 450.4' stroke='#333' stroke-width='1.4' fill='none'/></svg>
<div class='t' style='left:31.00px;top:8px;font-size:12px;letter-spacing:0.048px;color:#000000'>Mobile Data Management</div><div class='t' style='left:13.00px;top:41px;font-size:10.8px;letter-spacing:0.000px;color:#000000'>Connected device: None</div><div class='t' style='left:21.00px;top:72px;font-size:10.8px;letter-spacing:-0.191px;color:#000000'>Mobile Device Data Link</div><div class='t' style='left:144.30px;top:72px;font-size:10.8px;letter-spacing:-0.133px;color:#000000'>Package File Export</div><div class='t' style='left:250.60px;top:70px;font-size:10.8px;letter-spacing:-0.067px;color:#000000'>Package File Import</div><div class='t' style='left:45.50px;top:103px;font-size:10.8px;letter-spacing:0.283px;color:#000000'>Load...</div><div class='t' style='left:132.40px;top:103px;font-size:10.8px;letter-spacing:0.000px;color:#000000'>Prev</div><div class='t' style='left:196.50px;top:103px;font-size:10.8px;letter-spacing:0.400px;color:#000000'>Next</div><div class='t' style='left:262.10px;top:103px;font-size:10.8px;letter-spacing:-0.086px;color:#000000'>Keep All</div><div class='t' style='left:345.70px;top:103px;font-size:10.8px;letter-spacing:0.450px;color:#000000'>View...</div><div class='t' style='left:429.60px;top:103px;font-size:10.8px;letter-spacing:0.400px;color:#000000'>Merge...</div><div class='t' style='left:25.60px;top:126px;font-size:10.8px;letter-spacing:-0.300px;color:#000000'>FROM:</div><div class='t' style='left:74.30px;top:126px;font-size:10.8px;letter-spacing:-0.014px;color:#000000'>C:\Users\AmandaLind\Desktop\Jefferson_Georgia.gmmp</div><div class='t' style='left:25.60px;top:142px;font-size:10.8px;letter-spacing:0.550px;color:#000000'>TO:</div><div class='t' style='left:74.30px;top:142px;font-size:10.8px;letter-spacing:0.005px;color:#000000'>C:\Users\AmandaLind\Desktop\Jefferson_Georgia edited.gmmp</div><div class='t' style='left:31.30px;top:170px;font-size:12px;letter-spacing:0.733px;color:#000000'>Item</div><div class='t' style='left:225.30px;top:170px;font-size:12px;letter-spacing:-0.450px;color:#000000'>TO File Value</div><div class='t' style='left:417.70px;top:170px;font-size:12px;letter-spacing:-0.336px;color:#000000'>FROM File Value</div><div class='t' style='left:42.00px;top:444px;font-size:10.8px;letter-spacing:-0.040px;color:#000000'>Show Differences Only</div><div class='t' style='left:42.00px;top:460px;font-size:10.8px;letter-spacing:0.045px;color:#000000'>Always Load After Merge</div><div class='t' style='left:493.50px;top:457px;font-size:10.8px;letter-spacing:0.024px;color:#000000'>Expand All Differences</div><div class='t' style='left:625.60px;top:457px;font-size:10.8px;letter-spacing:-0.100px;color:#000000'>Collapse All</div>
<div class='clipt'><div class='t' style='left:68.40px;top:191px;font-size:12px;letter-spacing:-1.000px;color:#000000'>LAYER</div><div class='t' style='left:105.80px;top:191px;font-size:12px;letter-spacing:-0.300px;color:#000000'>[0001]</div><div class='t' style='left:140.40px;top:191px;font-size:12px;letter-spacing:0.000px;color:#000000'>[raster]</div><div class='t' style='left:228.90px;top:191px;font-size:12px;letter-spacing:-0.633px;color:#000000'>Base</div><div class='t' style='left:255.90px;top:191px;font-size:12px;letter-spacing:0.100px;color:#000000'>Map.jp2</div><div class='t' style='left:422.50px;top:191px;font-size:12px;letter-spacing:0.400px;color:#000000'>[no</div><div class='t' style='left:443.30px;top:191px;font-size:12px;letter-spacing:0.420px;color:#000000'>match]</div><div class='t' style='left:68.40px;top:209px;font-size:12px;letter-spacing:-1.000px;color:#000000'>LAYER</div><div class='t' style='left:105.80px;top:209px;font-size:12px;letter-spacing:-0.300px;color:#000000'>[0002]</div><div class='t' style='left:140.30px;top:209px;font-size:12px;letter-spacing:0.329px;color:#000000'>[vector]</div><div class='t' style='left:229.20px;top:209px;font-size:12px;letter-spacing:-0.575px;color:#000000'>Sewer</div><div class='t' style='left:422.50px;top:209px;font-size:12px;letter-spacing:0.400px;color:#000000'>[no</div><div class='t' style='left:443.30px;top:209px;font-size:12px;letter-spacing:0.420px;color:#000000'>match]</div><div class='t' style='left:87.00px;top:227px;font-size:12px;letter-spacing:-0.720px;color:#000000'>POINTS</div><div class='t' style='left:68.40px;top:245px;font-size:12px;letter-spacing:-1.000px;color:#000000'>LAYER</div><div class='t' style='left:105.80px;top:245px;font-size:12px;letter-spacing:-0.300px;color:#000000'>[0003]</div><div class='t' style='left:140.30px;top:245px;font-size:12px;letter-spacing:0.329px;color:#000000'>[vector]</div><div class='t' style='left:229.90px;top:245px;font-size:12px;letter-spacing:0.133px;color:#000000'>Utility</div><div class='t' style='left:262.60px;top:245px;font-size:12px;letter-spacing:-0.100px;color:#000000'>Poles</div><div class='t' style='left:422.50px;top:245px;font-size:12px;letter-spacing:0.400px;color:#000000'>[no</div><div class='t' style='left:443.30px;top:245px;font-size:12px;letter-spacing:0.420px;color:#000000'>match]</div><div class='t' style='left:68.40px;top:263px;font-size:12px;letter-spacing:-1.000px;color:#000000'>LAYER</div><div class='t' style='left:105.80px;top:263px;font-size:12px;letter-spacing:-0.300px;color:#000000'>[0004]</div><div class='t' style='left:140.30px;top:263px;font-size:12px;letter-spacing:0.329px;color:#000000'>[vector]</div><div class='t' style='left:229.10px;top:263px;font-size:12px;letter-spacing:-0.433px;color:#000000'>Area</div><div class='t' style='left:422.50px;top:263px;font-size:12px;letter-spacing:0.400px;color:#000000'>[no</div><div class='t' style='left:443.30px;top:263px;font-size:12px;letter-spacing:0.420px;color:#000000'>match]</div><div class='t' style='left:88.00px;top:281px;font-size:12px;letter-spacing:-1.250px;color:#000000'>AREAS</div><div class='t' style='left:107.10px;top:299px;font-size:12px;letter-spacing:-1.200px;color:#000000'>AREA</div><div class='t' style='left:139.70px;top:299px;font-size:12px;letter-spacing:-0.360px;color:#000000'>[0001]</div><div class='t' style='left:229.10px;top:299px;font-size:12px;letter-spacing:-0.367px;color:#000000'>Area</div><div class='t' style='left:256.30px;top:299px;font-size:12px;letter-spacing:-1.900px;color:#000000'>51</div><div class='t' style='left:422.50px;top:299px;font-size:12px;letter-spacing:0.400px;color:#000000'>[no</div><div class='t' style='left:443.30px;top:299px;font-size:12px;letter-spacing:0.420px;color:#000000'>match]</div><div class='t' style='left:107.10px;top:317px;font-size:12px;letter-spacing:-1.200px;color:#000000'>AREA</div><div class='t' style='left:139.70px;top:317px;font-size:12px;letter-spacing:-0.360px;color:#000000'>[0002]</div><div class='t' style='left:229.10px;top:317px;font-size:12px;letter-spacing:-0.367px;color:#000000'>Area</div><div class='t' style='left:256.30px;top:317px;font-size:12px;letter-spacing:-1.700px;color:#000000'>52</div><div class='t' style='left:422.50px;top:317px;font-size:12px;letter-spacing:0.400px;color:#000000'>[no</div><div class='t' style='left:443.30px;top:317px;font-size:12px;letter-spacing:0.420px;color:#000000'>match]</div><div class='t' style='left:107.10px;top:335px;font-size:12px;letter-spacing:-1.200px;color:#000000'>AREA</div><div class='t' style='left:139.70px;top:335px;font-size:12px;letter-spacing:-0.360px;color:#000000'>[0003]</div><div class='t' style='left:229.10px;top:335px;font-size:12px;letter-spacing:-0.367px;color:#000000'>Area</div><div class='t' style='left:255.80px;top:335px;font-size:12px;letter-spacing:-0.500px;color:#000000'>404</div><div class='t' style='left:422.50px;top:335px;font-size:12px;letter-spacing:0.400px;color:#000000'>[no</div><div class='t' style='left:443.30px;top:335px;font-size:12px;letter-spacing:0.420px;color:#000000'>match]</div><div class='t' style='left:68.40px;top:353px;font-size:12px;letter-spacing:-1.000px;color:#000000'>LAYER</div><div class='t' style='left:105.80px;top:353px;font-size:12px;letter-spacing:-0.300px;color:#000000'>[0005]</div><div class='t' style='left:140.30px;top:353px;font-size:12px;letter-spacing:0.329px;color:#000000'>[vector]</div><div class='t' style='left:228.60px;top:353px;font-size:12px;letter-spacing:0.167px;color:#000000'>Line</div><div class='t' style='left:422.50px;top:353px;font-size:12px;letter-spacing:0.400px;color:#000000'>[no</div><div class='t' style='left:443.30px;top:353px;font-size:12px;letter-spacing:0.420px;color:#000000'>match]</div><div class='t' style='left:87.00px;top:371px;font-size:12px;letter-spacing:-0.675px;color:#000000'>LINES</div><div class='t' style='left:106.90px;top:389px;font-size:12px;letter-spacing:-0.833px;color:#000000'>LINE</div><div class='t' style='left:134.90px;top:389px;font-size:12px;letter-spacing:-0.340px;color:#000000'>[0001]</div><div class='t' style='left:228.60px;top:389px;font-size:12px;letter-spacing:-0.033px;color:#000000'>Road</div><div class='t' style='left:422.50px;top:389px;font-size:12px;letter-spacing:0.400px;color:#000000'>[no</div><div class='t' style='left:443.30px;top:389px;font-size:12px;letter-spacing:0.420px;color:#000000'>match]</div><div class='t' style='left:106.90px;top:407px;font-size:12px;letter-spacing:-0.833px;color:#000000'>LINE</div><div class='t' style='left:134.90px;top:407px;font-size:12px;letter-spacing:-0.340px;color:#000000'>[0002]</div><div class='t' style='left:228.60px;top:407px;font-size:12px;letter-spacing:-0.033px;color:#000000'>Road</div><div class='t' style='left:422.50px;top:407px;font-size:12px;letter-spacing:0.400px;color:#000000'>[no</div><div class='t' style='left:443.30px;top:407px;font-size:12px;letter-spacing:0.420px;color:#000000'>match]</div><div class='t' style='left:68.40px;top:425px;font-size:12px;letter-spacing:-1.000px;color:#000000'>LAYER</div><div class='t' style='left:105.80px;top:425px;font-size:12px;letter-spacing:-0.300px;color:#000000'>[0006]</div><div class='t' style='left:140.40px;top:425px;font-size:12px;letter-spacing:0.000px;color:#000000'>[raster]</div><div class='t' style='left:229.50px;top:425px;font-size:12px;letter-spacing:0.400px;color:#000000'>[no</div><div class='t' style='left:250.30px;top:425px;font-size:12px;letter-spacing:0.420px;color:#000000'>match]</div><div class='t' style='left:421.90px;top:425px;font-size:12px;letter-spacing:-0.633px;color:#000000'>Base</div><div class='t' style='left:448.90px;top:425px;font-size:12px;letter-spacing:0.100px;color:#000000'>Map.jp2</div></div>
</body></html>
